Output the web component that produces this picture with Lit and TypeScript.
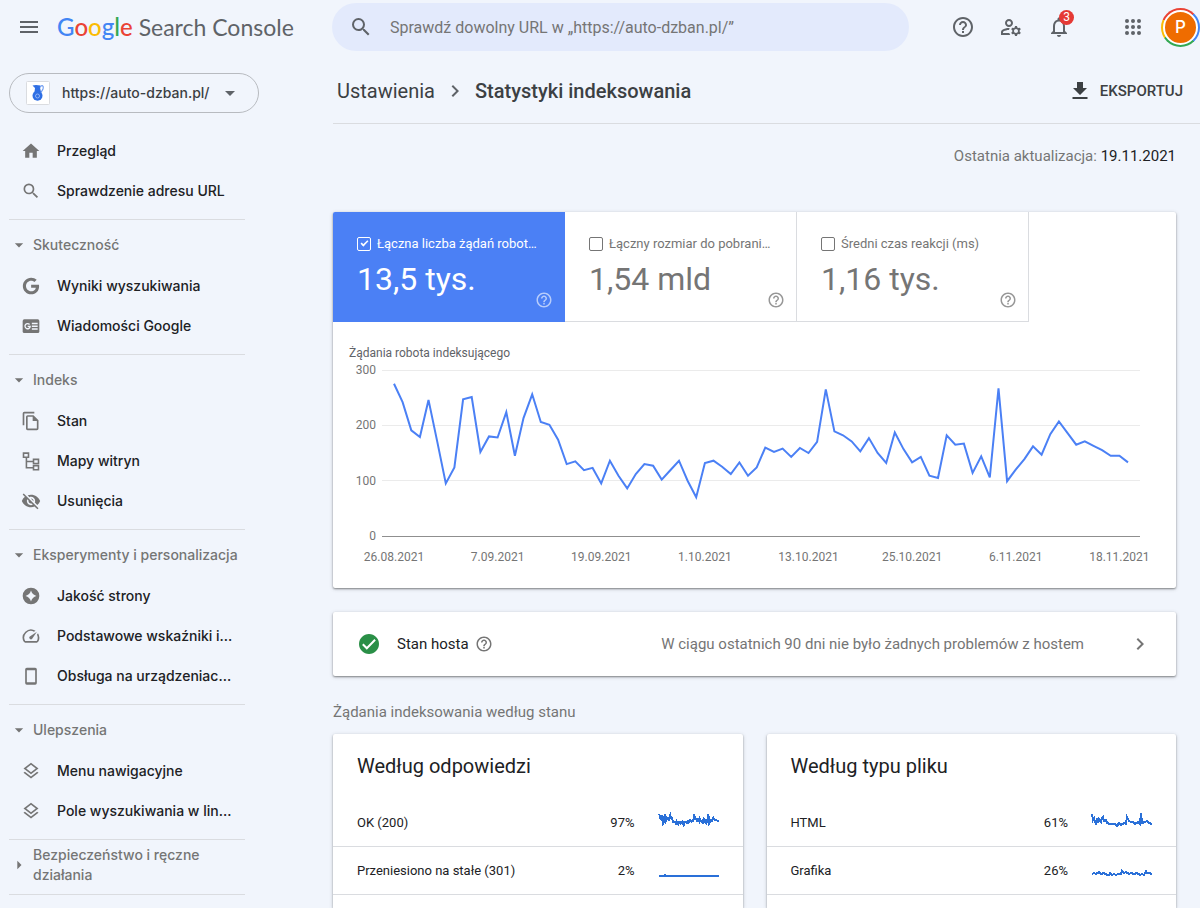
import { LitElement, html, css, svg } from "lit";
import { customElement, property } from "lit/decorators.js";
import { classMap } from "lit/directives/class-map.js";

const ICONS: Record<string, unknown> = {
  menu: svg`<path d="M3 18h18v-2H3v2zm0-5h18v-2H3v2zm0-7v2h18V6H3z"/>`,
  search: svg`<path d="M15.5 14h-.79l-.28-.27A6.471 6.471 0 0 0 16 9.5 6.5 6.5 0 1 0 9.5 16c1.61 0 3.09-.59 4.23-1.57l.27.28v.79l5 4.99L20.49 19l-4.99-5zm-6 0C7.01 14 5 11.99 5 9.5S7.01 5 9.5 5 14 7.01 14 9.5 11.99 14 9.5 14z"/>`,
  help: svg`<path d="M11 18h2v-2h-2v2zm1-16C6.48 2 2 6.48 2 12s4.48 10 10 10 10-4.48 10-10S17.52 2 12 2zm0 18c-4.41 0-8-3.59-8-8s3.59-8 8-8 8 3.59 8 8-3.59 8-8 8zm0-14c-2.21 0-4 1.79-4 4h2c0-1.1.9-2 2-2s2 .9 2 2c0 2-3 1.75-3 5h2c0-2.25 3-2.5 3-5 0-2.21-1.79-4-4-4z"/>`,
  manage: svg`<path d="M4 18v-.65c0-.34.16-.66.41-.81C6.1 15.53 8.03 15 10 15c.03 0 .05 0 .08.01.1-.7.3-1.37.59-1.98-.22-.02-.44-.03-.67-.03-2.42 0-4.68.67-6.61 1.82-.88.52-1.39 1.5-1.39 2.53V20h9.26c-.42-.6-.75-1.28-.97-2H4zM10 12c2.21 0 4-1.79 4-4s-1.79-4-4-4-4 1.79-4 4 1.79 4 4 4zm0-6c1.1 0 2 .9 2 2s-.9 2-2 2-2-.9-2-2 .9-2 2-2zM20.75 16c0-.22-.03-.42-.06-.63l1.14-1.01-1-1.73-1.45.49c-.32-.27-.68-.48-1.08-.63L18 11h-2l-.3 1.49c-.4.15-.76.36-1.08.63l-1.45-.49-1 1.73 1.14 1.01c-.03.21-.06.41-.06.63s.03.42.06.63l-1.14 1.01 1 1.73 1.45-.49c.32.27.68.48 1.08.63L16 21h2l.3-1.49c.4-.15.76-.36 1.08-.63l1.45.49 1-1.73-1.14-1.01c.03-.21.06-.41.06-.63zM17 18c-1.1 0-2-.9-2-2s.9-2 2-2 2 .9 2 2-.9 2-2 2z"/>`,
  bell: svg`<path d="M12 22c1.1 0 2-.9 2-2h-4c0 1.1.9 2 2 2zm6-6v-5c0-3.07-1.63-5.64-4.5-6.32V4c0-.83-.67-1.5-1.5-1.5s-1.5.67-1.5 1.5v.68C7.64 5.36 6 7.92 6 11v5l-2 2v1h16v-1l-2-2zm-2 1H8v-6c0-2.48 1.51-4.5 4-4.5s4 2.02 4 4.5v6z"/>`,
  apps: svg`${[6, 12, 18].map((y) => [6, 12, 18].map((x) => svg`<circle cx=${x} cy=${y} r="2"/>`))}`,
  caret: svg`<path d="M7 10l5 5 5-5z"/>`,
  caretRight: svg`<path d="M10 17l5-5-5-5z"/>`,
  chevron: svg`<path d="M10 6L8.59 7.41 13.17 12l-4.58 4.59L10 18l6-6z"/>`,
  download: svg`<path d="M19 9h-4V3H9v6H5l7 7 7-7zM4.5 18v2h15v-2h-15z"/>`,
  home: svg`<path d="M10 20v-6h4v6h5v-8h3L12 3 2 12h3v8z"/>`,
  google: svg`<path transform="translate(2 2) scale(.83)" d="M12.24 10.285V14.4h6.806c-.275 1.765-2.056 5.174-6.806 5.174-4.095 0-7.439-3.389-7.439-7.574s3.345-7.574 7.439-7.574c2.33 0 3.891.989 4.785 1.849l3.254-3.138C18.189 1.186 15.479 0 12.24 0c-6.635 0-12 5.365-12 12s5.365 12 12 12c6.926 0 11.52-4.869 11.52-11.726 0-.788-.085-1.39-.189-1.989H12.24z"/>`,
  news: svg`<rect x="2" y="4" width="20" height="16.500" rx="2"/><g fill="none" stroke="#f1f5fc" stroke-width="1.600"><path d="M10.300 10.200A3.100 3.100 0 1 0 11 12.500H8"/><path d="M13 9h7M13 12.300h7M13 15.600h7"/></g>`,
  pages: svg`<path d="M16 1H4a2 2 0 0 0-2 2v14h2V3h12V1zm-1 4H8.010A2 2 0 0 0 6 7v14c0 1.100.890 2 1.990 2H19a2 2 0 0 0 2-2V11l-6-6zM8 21V7h6v5h5v9H8z"/>`,
  sitemap: svg`<g fill="none" stroke="currentColor" stroke-width="1.900"><path d="M3 2.500h6v5H3zM15 10h6v5h-6zM15 17.500h6v5h-6zM6.500 8v12H15M6.500 12.500H15"/></g>`,
  hidden: svg`<path d="M12 7c2.760 0 5 2.240 5 5 0 .650-.130 1.260-.360 1.830l2.920 2.920c1.510-1.260 2.700-2.890 3.430-4.750-1.730-4.390-6-7.500-11-7.500-1.400 0-2.740.250-3.980.700l2.160 2.160C10.740 7.130 11.350 7 12 7zM2 4.270l2.280 2.280.460.460A11.800 11.800 0 0 0 1 12c1.730 4.390 6 7.500 11 7.500 1.550 0 3.030-.300 4.380-.840l.420.420L19.730 22 21 20.730 3.270 3 2 4.270zM7.530 9.800l1.550 1.550c-.050.210-.080.430-.080.650 0 1.660 1.340 3 3 3 .220 0 .440-.030.650-.080l1.550 1.550c-.670.330-1.410.530-2.200.530-2.760 0-5-2.240-5-5 0-.790.200-1.530.530-2.200zm4.310-.780l3.150 3.150.020-.160c0-1.660-1.340-3-3-3l-.170.010z"/>`,
  quality: svg`<path fill-rule="evenodd" d="M12 2a10 10 0 1 0 0 20 10 10 0 0 0 0-20zM12 5.500Q13.500 10.500 18.500 12 13.500 13.500 12 18.500 10.500 13.500 5.500 12 10.500 10.500 12 5.500z"/>`,
  speed: svg`<path d="M20.380 8.570l-1.230 1.850a8 8 0 0 1-.220 7.580H5.070A8 8 0 0 1 15.580 6.850l1.850-1.230A10 10 0 0 0 3.350 19a2 2 0 0 0 1.720 1h13.850a2 2 0 0 0 1.740-1 10 10 0 0 0-.270-10.440zm-9.790 6.840a2 2 0 0 0 2.830 0l5.660-8.490-8.490 5.660a2 2 0 0 0 0 2.830z"/>`,
  phone: svg`<path fill-rule="evenodd" d="M7 2h10a2 2 0 0 1 2 2v16.500a2 2 0 0 1-2 2H7a2 2 0 0 1-2-2V4a2 2 0 0 1 2-2zM7 5v14.500h10V5z"/>`,
  layers: svg`<path d="M11.990 18.540l-7.370-5.730L3 14.070l9 7 9-7-1.630-1.270-7.380 5.740zM12 16l7.360-5.730L21 9l-9-7-9 7 1.630 1.270L12 16zm0-11.470L17.740 9 12 13.470 6.260 9 12 4.530z"/>`,
  jug: svg`<rect x="0.500" y="0.500" width="23" height="23" rx="1" fill="#fff" stroke="#dadce0"/><g fill="#2f6fe4"><path d="M6.500 4.500l3.500-.5 4.500.5-.5 2 1 4.500H8.500L9 7z"/><circle cx="11.500" cy="14.700" r="5"/></g><path d="M14 6.500c2-3.500 4-1.500 3 1.500l-2 3.500" fill="none" stroke="#6f9cf0" stroke-width="1.200"/><circle cx="11.500" cy="15" r="2" fill="none" stroke="#8fb2f5"/>`,
  check: svg`<path fill="#2a8f47" d="M12 2C6.480 2 2 6.480 2 12s4.480 10 10 10 10-4.480 10-10S17.520 2 12 2z"/><path fill="none" stroke="#fff" stroke-width="2" d="M5.800 12.300l4 4 8.300-8.500"/>`,
};

@customElement("ui-icon")
class UiIcon extends LitElement {
  @property() name = "";
  @property({ type: Number }) size = 24;
  static styles = css`
    :host { display: inline-flex; flex: none; }
    svg { display: block; fill: currentColor; }
  `;
  render() {
    return html`<svg width=${this.size} height=${this.size} viewBox="0 0 24 24" aria-hidden="true">${ICONS[this.name]}</svg>`;
  }
}

const REQUESTS = [
  275, 242, 191, 179, 246, 171, 95, 124, 247, 251, 152, 180, 178, 224, 145, 213, 256, 206, 201, 174, 130, 135,
  119, 123, 95, 136, 109, 86, 112, 130, 127, 102, 119, 136, 100, 70, 132, 136, 125, 112, 133, 109, 124,
  160, 152, 158, 143, 159, 150, 170, 265, 189, 182, 171, 153, 177, 150, 132, 187, 157, 133, 143, 109, 105,
  182, 165, 167, 114, 144, 106, 267, 99, 120, 139, 162, 147, 184, 207, 186, 165, 171, 163, 155, 145, 145, 133,
];

const DATES = ["26.08.2021", "7.09.2021", "19.09.2021", "1.10.2021", "13.10.2021", "25.10.2021", "6.11.2021", "18.11.2021"];

@customElement("requests-chart")
class RequestsChart extends LitElement {
  static styles = css`
    :host { display: block; }
    svg { display: block; width: 100%; height: auto; }
    text { font: 12px Roboto, sans-serif; fill: #757575; }
    .title { fill: #5f6368; }
    .grid { stroke: #ebebeb; }
    .axis { stroke: #8f8f8f; }
    .line { fill: none; stroke: #4b80f5; stroke-width: 2; }
  `;
  render() {
    const y = (v: number) => 214 - (v * 166) / 300;
    const x = (i: number) => 61 + (i * 734) / 85;
    return html`<svg viewBox="0 0 843 266" role="img" aria-label="Żądania robota indeksującego">
      <text class="title" x="16" y="35">Żądania robota indeksującego</text>
      ${[300, 200, 100, 0].map((v) => {
        const gy = Math.floor(y(v)) + 0.5;
        return svg`<path class=${v ? "grid" : "axis"} d="M49 ${gy}H807"/>
          <text x="43" y=${Math.round(y(v)) + 4} text-anchor="end">${v}</text>`;
      })}
      <path class="line" d=${"M" + REQUESTS.map((v, i) => `${x(i).toFixed(1)} ${y(v).toFixed(1)}`).join("L")}></path>
      ${DATES.map((d, i) => svg`<text x=${x(i * 12)} y="239" text-anchor="middle">${d}</text>`)}
    </svg>`;
  }
}

type Point = [number, number];
const SPARKS: Record<string, Point[]> = {
  ok: REQUESTS.map((v, i) => [(i * 60) / 85, 15.8 - v * 0.0537]),
  moved: [[0, 15], [5, 15], [6, 14], [7, 15], [60, 15]],
  html: [
    [0, 1], [1, 7], [2, 5], [4, 12], [5, 5], [6, 10], [7, 6], [9, 9], [10, 5], [11, 4], [12, 8], [14, 7], [15, 10],
    [18, 11], [23, 11], [25, 13], [27, 10], [29, 12], [32, 10], [34, 11], [35, 4], [37, 8], [39, 9], [41, 9],
    [43, 11], [46, 9], [48, 11], [49, 0], [50, 10], [53, 9], [55, 8], [57, 10], [60, 11],
  ],
  images: [
    [0, 13], [2, 12], [4, 13], [7, 11], [9, 13], [12, 12], [15, 14], [17, 14], [18, 12], [20, 14], [22, 13], [24, 14],
    [26, 13], [29, 13], [30, 10], [32, 12], [34, 11], [37, 13], [39, 12], [42, 13], [45, 12], [48, 14], [50, 13],
    [52, 14], [54, 10], [55, 12], [57, 12], [60, 13],
  ],
};

@customElement("stat-card")
class StatCard extends LitElement {
  @property() heading = "";
  @property({ attribute: false }) rows: string[][] = [];
  static styles = css`
    :host {
      display: block;
      background: #fff;
      border-radius: 2px 2px 0 0;
      box-shadow: 0 1px 2px rgba(0, 0, 0, 0.35), 0 1px 4px rgba(60, 64, 67, 0.2);
    }
    h2 { margin: 0; padding: 20px 24px 21px; font-size: 20px; line-height: 24px; font-weight: 400; }
    table { width: 100%; border-collapse: collapse; font-size: 13px; line-height: 20px; }
    th, td { height: 47px; padding: 0; border-bottom: 1px solid #dadce0; font-weight: 400; }
    th { text-align: left; padding-left: 24px; }
    .share { text-align: right; }
    .trend { width: 60px; padding: 0 24px; }
    svg { display: block; overflow: visible; }
    path { fill: none; stroke: #2a70d8; stroke-width: 2; shape-rendering: crispEdges; }
  `;
  render() {
    return html`<h2>${this.heading}</h2>
      <table>
        ${this.rows.map(
          ([name, share, spark]) => html`<tr>
            <th scope="row">${name}</th>
            <td class="share">${share}</td>
            <td class="trend">
              <svg width="60" height="20" aria-hidden="true">
                <path d=${"M" + SPARKS[spark].map(([x, y]) => `${x.toFixed(1)} ${y.toFixed(1)}`).join("L")}></path>
              </svg>
            </td>
          </tr>`
        )}
      </table>`;
  }
}

@customElement("side-nav")
class SideNav extends LitElement {
  static styles = css`
    :host { display: block; font: 500 14px/20px Inter, sans-serif; color: #202124; }
    .property {
      display: flex;
      align-items: center;
      box-sizing: border-box;
      height: 40px;
      width: 250px;
      margin: 19px 0 17px 9px;
      padding: 0 16px;
      gap: 4px;
      border: 1px solid #b8bbc0;
      border-radius: 20px;
      color: #5f6368;
    }
    select {
      appearance: none;
      flex: 1;
      min-width: 0;
      border: 0;
      padding: 0 0 0 8px;
      background: none;
      font: inherit;
      color: #3c4043;
    }
    section { width: 236px; margin-left: 9px; padding-bottom: 9px; }
    section + section { border-top: 1px solid #dadce0; padding-top: 5px; }
    .last { border-bottom: 1px solid #dadce0; }
    a, button {
      display: flex;
      align-items: center;
      box-sizing: border-box;
      min-height: 40px;
      width: 100%;
      font: inherit;
      color: inherit;
    }
    a { gap: 16px; padding: 2px 0 0 12px; text-decoration: none; white-space: nowrap; }
    a ui-icon { color: #757575; }
    button { gap: 4px; border: 0; padding: 0; background: none; text-align: left; color: #757575; }
  `;
  private link(icon: string, text: string) {
    return html`<a href="#"><ui-icon name=${icon} size="20"></ui-icon>${text}</a>`;
  }
  private head(text: string, open = true) {
    return html`<button aria-expanded=${open}>
      <ui-icon name=${open ? "caret" : "caretRight"} size="20"></ui-icon><span>${text}</span>
    </button>`;
  }
  render() {
    return html`
      <label class="property">
        <ui-icon name="jug"></ui-icon>
        <select aria-label="https://auto-dzban.pl/"><option>https://auto-dzban.pl/</option></select>
        <ui-icon name="caret"></ui-icon>
      </label>
      <nav>
        <section>${this.link("home", "Przegląd")} ${this.link("search", "Sprawdzenie adresu URL")}</section>
        <section>
          ${this.head("Skuteczność")} ${this.link("google", "Wyniki wyszukiwania")}
          ${this.link("news", "Wiadomości Google")}
        </section>
        <section>
          ${this.head("Indeks")} ${this.link("pages", "Stan")} ${this.link("sitemap", "Mapy witryn")}
          ${this.link("hidden", "Usunięcia")}
        </section>
        <section>
          ${this.head("Eksperymenty i personalizacja")} ${this.link("quality", "Jakość strony")}
          ${this.link("speed", "Podstawowe wskaźniki i…")} ${this.link("phone", "Obsługa na urządzeniac…")}
        </section>
        <section>
          ${this.head("Ulepszenia")} ${this.link("layers", "Menu nawigacyjne")}
          ${this.link("layers", "Pole wyszukiwania w lin…")}
        </section>
        <section class="last">${this.head("Bezpieczeństwo i ręczne działania", false)}</section>
      </nav>
    `;
  }
}

const METRICS = [
  { label: "Łączna liczba żądań robot…", value: "13,5 tys.", on: true },
  { label: "Łączny rozmiar do pobrani…", value: "1,54 mld", on: false },
  { label: "Średni czas reakcji (ms)", value: "1,16 tys.", on: false },
];

@customElement("app-root")
class AppRoot extends LitElement {
  static styles = css`
    :host {
      display: flex;
      flex-direction: column;
      height: 100vh;
      overflow: hidden;
      background: #f1f5fc;
      color: #202124;
      font: 14px/20px Roboto, sans-serif;
    }
    button { border: 0; padding: 0; background: none; font: inherit; color: inherit; }
    header { display: flex; align-items: center; flex: none; height: 54px; color: #5f6368; }
    .brand { display: flex; align-items: center; box-sizing: border-box; width: 332px; padding-left: 17px; gap: 16px; }
    .menu { display: flex; }
    .logo { display: flex; align-items: baseline; gap: 6px; font: 23px/32px Lato, sans-serif; white-space: nowrap; }
    .google { font-size: 24px; font-weight: 500; }
    .blue { color: #4285f4; }
    .red { color: #ea4335; }
    .yellow { color: #fbbc04; }
    .green { color: #34a853; }
    .search {
      display: flex;
      align-items: center;
      flex: 1;
      min-width: 0;
      height: 48px;
      margin-right: 30px;
      padding-left: 17px;
      gap: 17px;
      border-radius: 24px;
      background: #e3eafc;
    }
    .search input {
      flex: 1;
      min-width: 0;
      border: 0;
      padding: 2px 0 0;
      background: none;
      outline: none;
      font: 16px/24px Roboto, sans-serif;
    }
    .search input::placeholder { color: #757575; opacity: 1; }
    .tool { position: relative; display: grid; place-items: center; width: 48px; height: 48px; }
    .badge {
      position: absolute;
      top: 7px;
      right: 9px;
      width: 15px;
      height: 15px;
      border-radius: 50%;
      background: #e53935;
      color: #fff;
      font-size: 12px;
      line-height: 15px;
    }
    .apps { margin-left: 26px; }
    .avatar {
      display: grid;
      place-items: center;
      box-sizing: border-box;
      width: 39px;
      height: 39px;
      margin-left: 4px;
      border-radius: 50%;
      background: conic-gradient(#ea4335 0 12%, #4285f4 12% 38%, #34a853 38% 66%, #fbbc04 66% 82%, #ea4335 82%);
    }
    .avatar span {
      box-sizing: border-box;
      width: 35px;
      height: 35px;
      border: 2px solid #fff;
      border-radius: 50%;
      background: #ef6c00;
      color: #fff;
      font: 500 17px/31px Inter, sans-serif;
      text-align: center;
    }
    .body { display: flex; flex: 1; min-height: 0; }
    side-nav { flex: none; width: 333px; }
    main { display: flex; flex-direction: column; flex: 1; min-width: 0; }
    .title {
      display: flex;
      align-items: center;
      justify-content: space-between;
      flex: none;
      box-sizing: border-box;
      height: 70px;
      padding: 4px 17px 0 4px;
      border-bottom: 1px solid #dadce0;
      color: #3c4043;
    }
    .crumbs { display: flex; align-items: center; gap: 8px; font-size: 20px; line-height: 28px; }
    .crumbs a { color: inherit; text-decoration: none; }
    .crumbs ui-icon { color: #5f6368; }
    h1 { margin: 0; font: inherit; font-weight: 500; }
    .export { display: flex; align-items: center; gap: 8px; font-size: 15px; font-weight: 500; }
    .content { display: flex; flex-direction: column; flex: 1; min-height: 0; padding: 20px 24px 0 0; }
    .updated { margin: 0 0 44px; font-size: 15px; line-height: 24px; text-align: right; color: #757575; }
    .updated b { font-weight: 400; color: #202124; }
    .card {
      flex: none;
      margin-bottom: 24px;
      border-radius: 2px;
      background: #fff;
      box-shadow: 0 1px 2px rgba(0, 0, 0, 0.4), 0 1px 4px rgba(60, 64, 67, 0.2);
    }
    .metrics { display: flex; }
    .metric {
      display: flex;
      flex-direction: column;
      box-sizing: border-box;
      width: 232px;
      height: 110px;
      padding: 22px 11px 12px 24px;
      border: solid #dadce0;
      border-width: 0 1px 1px 0;
      color: #757575;
    }
    .metric.on { border-color: #4b80f5; border-radius: 2px 0 0 0; background: #4b80f5; color: #fff; }
    .metric label { display: flex; align-items: center; gap: 6px; font-size: 13px; line-height: 20px; white-space: nowrap; }
    .metric input {
      appearance: none;
      flex: none;
      box-sizing: border-box;
      width: 14px;
      height: 14px;
      margin: 0;
      border: 1px solid;
      border-color: inherit;
      border-radius: 2px;
      color: inherit;
      border-color: currentColor;
      display: grid;
      place-items: center;
    }
    .metric input:checked::after {
      content: "";
      width: 7px;
      height: 3px;
      margin-bottom: 3px;
      border: solid #fff;
      border-width: 0 0 2px 2px;
      box-sizing: content-box;
      transform: rotate(-45deg) scale(0.8);
    }
    .value { font-size: 32px; line-height: 40px; margin-top: 5px; }
    .metric ui-icon { align-self: flex-end; margin-top: -8px; opacity: 0.75; }
    .metric.on ui-icon { opacity: 0.6; }
    .host { display: flex; align-items: center; height: 64px; padding: 0 24px; font-size: 15px; line-height: 24px; }
    .host .name { margin: 0 6px 0 16px; }
    .host .help { color: #757575; }
    .host .state { margin-left: auto; margin-right: 44px; color: #757575; }
    .host .go { color: #757575; }
    .label { margin: 0 0 10px; font-size: 15px; line-height: 24px; color: #757575; }
    .cards { display: grid; grid-template-columns: 1fr 1fr; gap: 24px; flex: 1; }
  `;
  render() {
    return html`
      <header>
        <div class="brand">
          <button class="menu" aria-label="Menu"><ui-icon name="menu"></ui-icon></button>
          <div class="logo">
            <span class="google"><span class="blue">G</span><span class="red">o</span><span class="yellow">o</span><span class="blue">g</span><span class="green">l</span><span class="red">e</span></span>
            <span>Search Console</span>
          </div>
        </div>
        <label class="search">
          <ui-icon name="search"></ui-icon>
          <input type="text" placeholder="Sprawdź dowolny URL w „https://auto-dzban.pl/”" />
        </label>
        <button class="tool" aria-label="Pomoc"><ui-icon name="help"></ui-icon></button>
        <button class="tool" aria-label="Użytkownicy"><ui-icon name="manage"></ui-icon></button>
        <button class="tool" aria-label="Powiadomienia"><ui-icon name="bell"></ui-icon><span class="badge">3</span></button>
        <button class="tool apps" aria-label="Aplikacje"><ui-icon name="apps"></ui-icon></button>
        <button class="avatar" aria-label="Konto"><span>P</span></button>
      </header>
      <div class="body">
        <side-nav></side-nav>
        <main>
          <div class="title">
            <div class="crumbs">
              <a href="#">Ustawienia</a>
              <ui-icon name="chevron"></ui-icon>
              <h1>Statystyki indeksowania</h1>
            </div>
            <button class="export"><ui-icon name="download"></ui-icon>EKSPORTUJ</button>
          </div>
          <div class="content">
            <p class="updated">Ostatnia aktualizacja: <b>19.11.2021</b></p>
            <div class="card">
              <div class="metrics">
                ${METRICS.map(
                  (m) => html`<div class=${classMap({ metric: true, on: m.on })}>
                    <label><input type="checkbox" .checked=${m.on} />${m.label}</label>
                    <span class="value">${m.value}</span>
                    <ui-icon name="help" size="18"></ui-icon>
                  </div>`
                )}
              </div>
              <requests-chart></requests-chart>
            </div>
            <div class="card host">
              <ui-icon name="check"></ui-icon>
              <span class="name">Stan hosta</span>
              <ui-icon class="help" name="help" size="18"></ui-icon>
              <span class="state">W ciągu ostatnich 90 dni nie było żadnych problemów z hostem</span>
              <ui-icon class="go" name="chevron"></ui-icon>
            </div>
            <p class="label">Żądania indeksowania według stanu</p>
            <div class="cards">
              <stat-card
                heading="Według odpowiedzi"
                .rows=${[["OK (200)", "97%", "ok"], ["Przeniesiono na stałe (301)", "2%", "moved"]]}
              ></stat-card>
              <stat-card
                heading="Według typu pliku"
                .rows=${[["HTML", "61%", "html"], ["Grafika", "26%", "images"]]}
              ></stat-card>
            </div>
          </div>
        </main>
      </div>
    `;
  }
}
